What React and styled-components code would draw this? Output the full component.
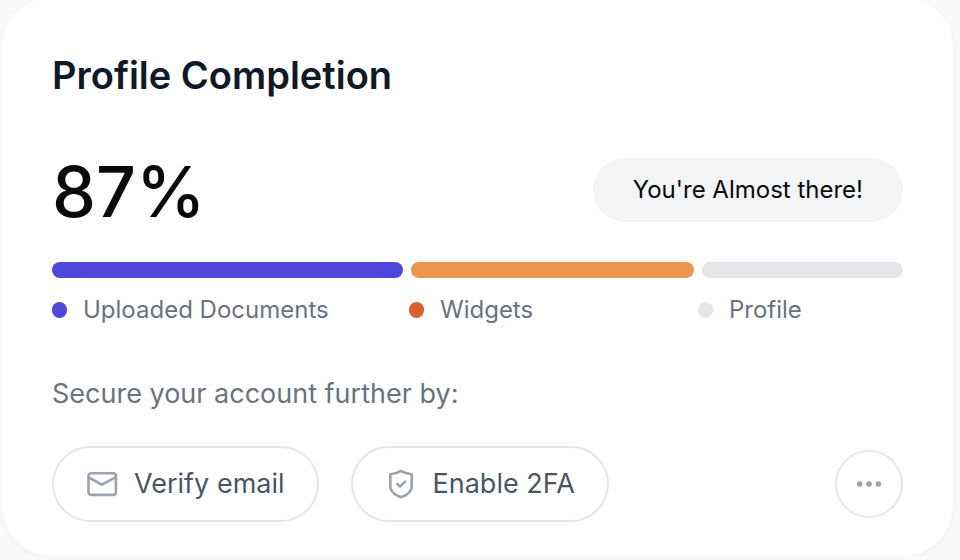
import React from 'react';
import styled, { createGlobalStyle } from 'styled-components';

const GlobalStyle = createGlobalStyle`
  *, *::before, *::after { box-sizing: border-box; }
  body {
    margin: 0;
    background: #f9fafb;
    font-family: Inter, "Noto Sans", sans-serif;
    -webkit-font-smoothing: antialiased;
  }
`;

const Card = styled.main`
  display: flex;
  flex-direction: column;
  margin: -3px 7px 0 2px;
  padding: 50px 50px 34px;
  border-radius: 50px;
  background: #ffffff;
  box-shadow: 0 2px 6px rgba(0, 0, 0, 0.04), 0 0 2px rgba(0, 0, 0, 0.02);
`;

const Title = styled.h1`
  margin: 0;
  color: #111827;
  font-size: 38px;
  font-weight: 600;
  line-height: 56px;
`;

const Summary = styled.div`
  display: flex;
  align-items: flex-start;
  justify-content: space-between;
  margin-top: 55px;
`;

const Percent = styled.span`
  color: #0a0a0a;
  font-size: 70px;
  font-weight: 500;
  line-height: 68px;
`;

const Pill = styled.span`
  padding: 16px 40px;
  border-radius: 32px;
  background: #f3f4f6;
  color: #0a0a0a;
  font-size: 24px;
  line-height: 32px;
`;

const Bars = styled.div`
  display: grid;
  grid-template-columns: 351fr 283fr 201fr;
  gap: 8px;
  margin-top: 36px;
`;

const Bar = styled.div`
  height: 16px;
  border-radius: 8px;
  background: ${(p) => p.$color};
`;

const Legend = styled.ul`
  display: grid;
  grid-template-columns: 357fr 289fr 205fr;
  margin: 16px 0 0;
  padding: 0;
  list-style: none;
`;

const LegendItem = styled.li`
  display: flex;
  align-items: center;
  gap: 16px;
  color: #6b7280;
  font-size: 24px;
  line-height: 32px;
`;

const Dot = styled.span`
  width: 15px;
  height: 16px;
  border-radius: 8px;
  background: ${(p) => p.$color};
`;

const Prompt = styled.p`
  margin: 48px 0 0;
  color: #6b7280;
  font-size: 27px;
  line-height: 40px;
`;

const Actions = styled.div`
  display: flex;
  align-items: center;
  gap: 32px;
  margin-top: 32px;
`;

const ActionButton = styled.button`
  display: flex;
  align-items: center;
  gap: 16px;
  padding: 16px 32px;
  border: 2px solid #e5e7eb;
  border-radius: 38px;
  background: #ffffff;
  color: #4b5563;
  font-family: inherit;
  font-size: 27px;
  line-height: 40px;
  cursor: pointer;
`;

const MoreButton = styled.button`
  display: grid;
  place-items: center;
  width: 68px;
  height: 68px;
  margin-left: auto;
  padding: 0;
  border: 2px solid #e5e7eb;
  border-radius: 50%;
  background: #ffffff;
  cursor: pointer;
`;

const Icon = styled.svg`
  width: 32px;
  height: 32px;
  flex: none;
  fill: none;
  stroke: #9ca3af;
  stroke-width: 2.6;
  stroke-linecap: round;
  stroke-linejoin: round;
`;

const sections = [
  { label: 'Uploaded Documents', bar: '#4f46dd', dot: '#4f46dd' },
  { label: 'Widgets', bar: '#ee964f', dot: '#da622a' },
  { label: 'Profile', bar: '#e5e6ea', dot: '#e5e6ea' },
];

const MailIcon = () => (
  <Icon viewBox="0 0 32 32" aria-hidden="true">
    <rect x="2.5" y="5.3" width="27.4" height="21.6" rx="2.6" />
    <path d="M2.6 9.4 L14.4 15.9 Q15.8 17 17.2 15.9 L29.6 9.4" />
  </Icon>
);

const ShieldIcon = () => (
  <Icon viewBox="0 0 32 32" aria-hidden="true">
    <path d="M16 2.8 C13 4.8 9.4 5.9 5.3 6.2 V18.4 C5.3 23.6 9.4 26.8 16 29.2 C22.6 26.8 26.7 23.6 26.7 18.4 V6.2 C22.6 5.9 19 4.8 16 2.8 Z" />
    <path d="M12.4 16 L15.1 18.5 L19.9 13.6" />
  </Icon>
);

const MoreIcon = () => (
  <Icon viewBox="0 0 32 32" aria-hidden="true">
    <g fill="#9ca3af" stroke="none">
      <circle cx="6.6" cy="16" r="2.8" />
      <circle cx="16" cy="16" r="2.8" />
      <circle cx="25.4" cy="16" r="2.8" />
    </g>
  </Icon>
);

export default function App() {
  return (
    <>
      <GlobalStyle />
      <Card>
        <Title>Profile Completion</Title>
        <Summary>
          <Percent>87%</Percent>
          <Pill>You're Almost there!</Pill>
        </Summary>
        <Bars>
          {sections.map((s) => (
            <Bar key={s.label} $color={s.bar} />
          ))}
        </Bars>
        <Legend>
          {sections.map((s) => (
            <LegendItem key={s.label}>
              <Dot $color={s.dot} />
              {s.label}
            </LegendItem>
          ))}
        </Legend>
        <Prompt>Secure your account further by:</Prompt>
        <Actions>
          <ActionButton type="button">
            <MailIcon />
            Verify email
          </ActionButton>
          <ActionButton type="button">
            <ShieldIcon />
            Enable 2FA
          </ActionButton>
          <MoreButton type="button" aria-label="More options">
            <MoreIcon />
          </MoreButton>
        </Actions>
      </Card>
    </>
  );
}
